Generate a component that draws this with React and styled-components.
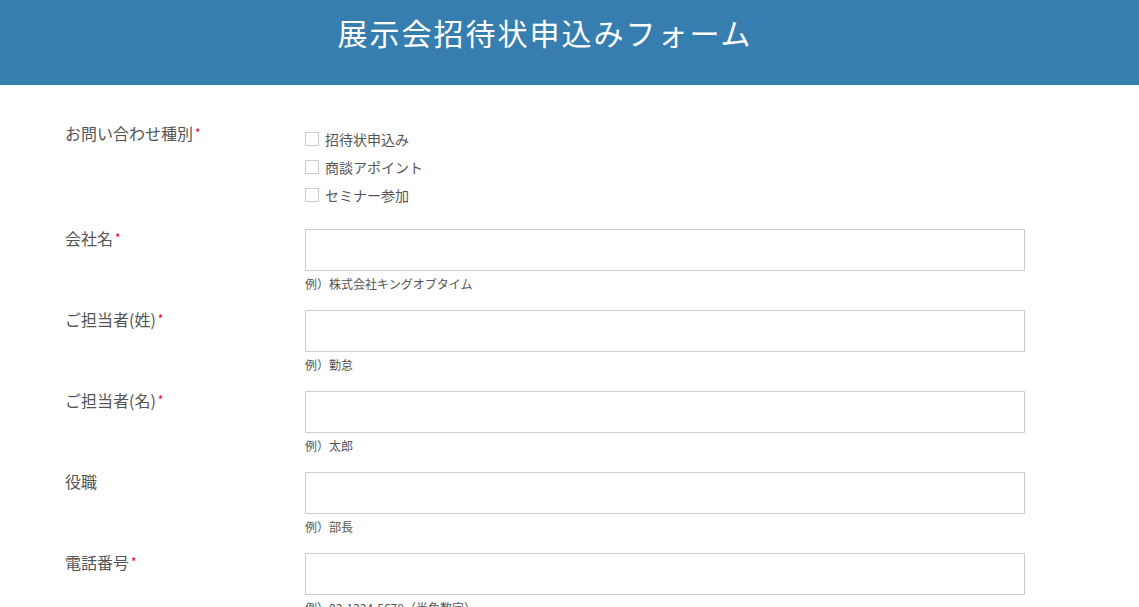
import React from "react";
import styled, { createGlobalStyle } from "styled-components";

const Global = createGlobalStyle`
  html, body { margin: 0; padding: 0; background: #fff; }
  body { font-family: "Noto Sans CJK JP", "Noto Sans", sans-serif; color: #555; }
  * { box-sizing: border-box; }
`;

const Header = styled.header`
  height: 85px;
  background: #377eb0;
  padding-left: 65px;
`;

const HeaderInner = styled.div`
  width: 960px;
  padding-top: 12px;
  text-align: center;
`;

const Title = styled.h1`
  margin: 0;
  font-weight: 400;
  font-size: 30px;
  letter-spacing: 2px;
  line-height: 40px;
  color: #fff;
`;

const Form = styled.form`
  padding: 39px 0 40px 65px;
  display: flex;
  flex-direction: column;
  gap: 17px;
`;

const Row = styled.div`
  display: grid;
  grid-template-columns: 240px 720px;
`;

const Label = styled.div`
  font-size: 16px;
  line-height: 24px;
  color: #555;
  margin-top: -3px;
`;

const Req = styled.span`
  color: #e5004f;
  font-size: 12px;
  margin-left: 2px;
  vertical-align: 2px;
`;

const CheckGroup = styled.div`
  display: flex;
  flex-direction: column;
  padding-top: 1px;
  padding-bottom: 3px;
`;

const CheckItem = styled.label`
  display: flex;
  align-items: center;
  height: 28px;
  font-size: 14px;
  color: #555;
`;

const Box = styled.span`
  width: 14px;
  height: 14px;
  border: 1px solid #ccc;
  background: #fff;
  margin-right: 6px;
  flex: none;
`;

const Field = styled.div`
  display: flex;
  flex-direction: column;
`;

const Input = styled.input`
  width: 720px;
  height: 42px;
  border: 1px solid #ccc;
  border-radius: 0;
  padding: 0 10px;
  font-size: 14px;
  font-family: inherit;
  outline: none;
`;

const Hint = styled.div`
  margin-top: 4px;
  font-size: 12px;
  line-height: 18px;
  color: #555;
`;

const fields = [
  { label: "会社名", req: true, hint: "例）株式会社キングオブタイム" },
  { label: "ご担当者(姓)", req: true, hint: "例）勤怠" },
  { label: "ご担当者(名)", req: true, hint: "例）太郎" },
  { label: "役職", req: false, hint: "例）部長" },
  { label: "電話番号", req: true, hint: "例）03-1234-5678（半角数字）" },
];

const options = ["招待状申込み", "商談アポイント", "セミナー参加"];

export default function App() {
  return (
    <>
      <Global />
      <Header>
        <HeaderInner>
          <Title>展示会招待状申込みフォーム</Title>
        </HeaderInner>
      </Header>
      <Form onSubmit={(e) => e.preventDefault()}>
        <Row>
          <Label>
            お問い合わせ種別<Req>*</Req>
          </Label>
          <CheckGroup>
            {options.map((o) => (
              <CheckItem key={o}>
                <Box />
                {o}
              </CheckItem>
            ))}
          </CheckGroup>
        </Row>
        {fields.map((f) => (
          <Row key={f.label}>
            <Label>
              {f.label}
              {f.req && <Req>*</Req>}
            </Label>
            <Field>
              <Input type="text" />
              <Hint>{f.hint}</Hint>
            </Field>
          </Row>
        ))}
      </Form>
    </>
  );
}
